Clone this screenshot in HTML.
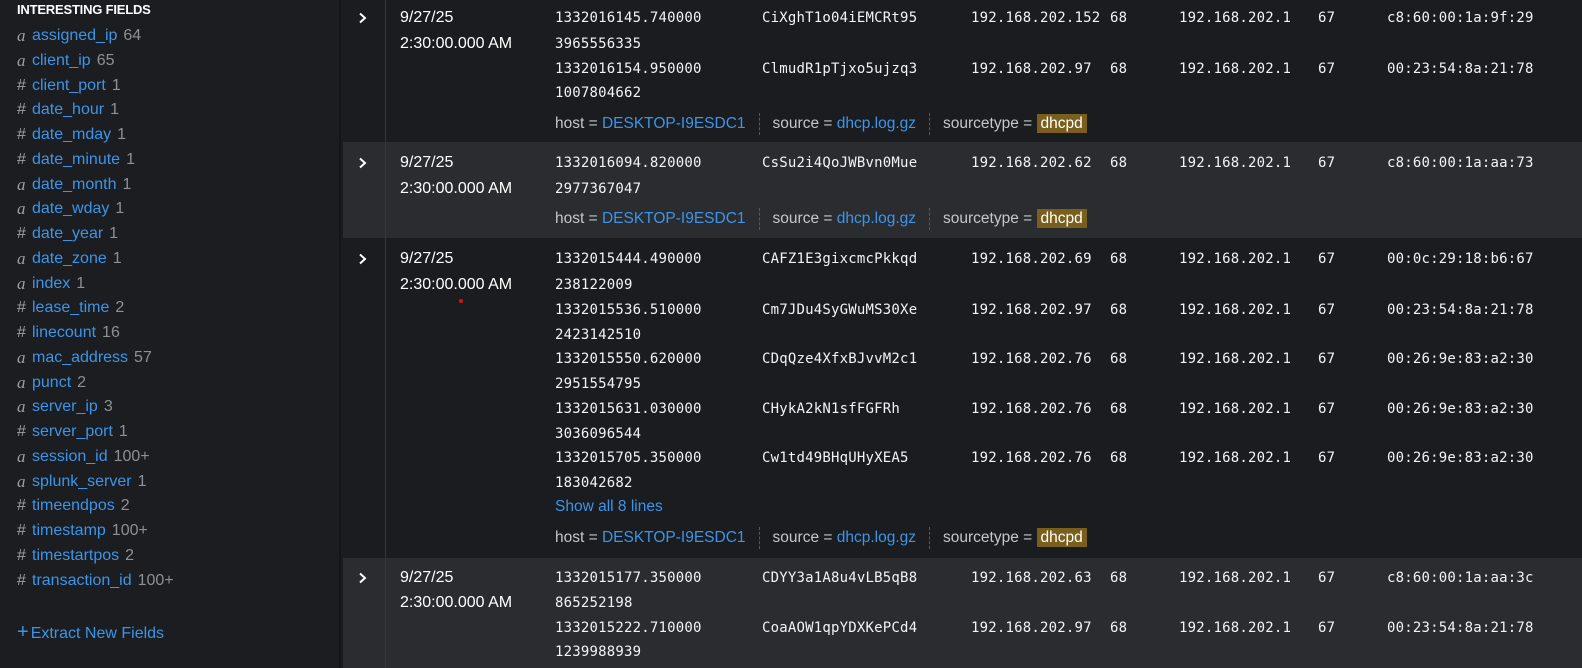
<!DOCTYPE html>
<html><head><meta charset="utf-8"><style>
*{margin:0;padding:0;box-sizing:border-box}
body{width:1582px;height:668px;overflow:hidden;background:#1a1c20;position:relative;font-family:"Liberation Sans",sans-serif;color:#e6e8ea}
#side{position:absolute;left:0;top:0;width:341px;height:668px;background:#1b1d21;border-right:2px solid #131518}
#side .h{position:absolute;left:17px;top:2px;font-size:13px;font-weight:bold;color:#fff;letter-spacing:-0.2px}
#side .f{position:absolute;left:17px;font-size:16px;color:#3c95e8;white-space:nowrap;line-height:20px;height:20px}
#side .f i{display:inline-block;width:15px;color:#9aa0a6;font-family:"Liberation Serif",serif;font-size:17px;line-height:20px;vertical-align:top}
#side .f b{display:inline-block;width:15px;color:#9aa0a6;font-weight:normal;line-height:20px;vertical-align:top}
#side .f s{color:#8c9196;text-decoration:none;margin-left:6px}
.row{position:absolute;left:343px;width:1239px}
.vl{position:absolute;left:385px;top:0;width:1px;height:668px;background:#33373c}
.chev{position:absolute;left:357px;width:12px;height:12px}
.t{position:absolute;left:400px;font-size:16px;color:#fff;line-height:20px;white-space:nowrap}
.m{position:absolute;font-family:"DejaVu Sans Mono",monospace;font-size:14px;letter-spacing:0.2px;color:#f2f3f4;line-height:18px;white-space:nowrap}
.meta{position:absolute;left:555px;font-size:15.5px;color:#c3c7cb;line-height:22px;white-space:nowrap}
.meta a{color:#3c95e8;text-decoration:none}
.meta .sep{display:inline-block;width:0;height:22px;border-left:1px dashed #555a60;vertical-align:middle;margin:0 13px 0 13px}
.meta .hl{background:#7a5f1c;color:#fff;padding:1px 4px}
.show{position:absolute;left:555px;font-size:15.5px;color:#3c95e8;line-height:20px}
</style></head><body>
<div id="side">
<div class="h">INTERESTING FIELDS</div>
<div class="f" style="top:26px"><i>a</i>assigned_ip<s>64</s></div>
<div class="f" style="top:51px"><i>a</i>client_ip<s>65</s></div>
<div class="f" style="top:76px"><b>#</b>client_port<s>1</s></div>
<div class="f" style="top:100px"><b>#</b>date_hour<s>1</s></div>
<div class="f" style="top:125px"><b>#</b>date_mday<s>1</s></div>
<div class="f" style="top:150px"><b>#</b>date_minute<s>1</s></div>
<div class="f" style="top:175px"><i>a</i>date_month<s>1</s></div>
<div class="f" style="top:199px"><i>a</i>date_wday<s>1</s></div>
<div class="f" style="top:224px"><b>#</b>date_year<s>1</s></div>
<div class="f" style="top:249px"><i>a</i>date_zone<s>1</s></div>
<div class="f" style="top:274px"><i>a</i>index<s>1</s></div>
<div class="f" style="top:298px"><b>#</b>lease_time<s>2</s></div>
<div class="f" style="top:323px"><b>#</b>linecount<s>16</s></div>
<div class="f" style="top:348px"><i>a</i>mac_address<s>57</s></div>
<div class="f" style="top:373px"><i>a</i>punct<s>2</s></div>
<div class="f" style="top:397px"><i>a</i>server_ip<s>3</s></div>
<div class="f" style="top:422px"><b>#</b>server_port<s>1</s></div>
<div class="f" style="top:447px"><i>a</i>session_id<s>100+</s></div>
<div class="f" style="top:472px"><i>a</i>splunk_server<s>1</s></div>
<div class="f" style="top:496px"><b>#</b>timeendpos<s>2</s></div>
<div class="f" style="top:521px"><b>#</b>timestamp<s>100+</s></div>
<div class="f" style="top:546px"><b>#</b>timestartpos<s>2</s></div>
<div class="f" style="top:571px"><b>#</b>transaction_id<s>100+</s></div>
<div class="f" style="top:622px;font-size:16px"><span style="font-size:20px;margin-right:2px">+</span>Extract New Fields</div>
</div>

<div class="row" style="top:0;height:142px;background:#1a1c20"></div>
<div class="row" style="top:142px;height:96px;background:#2a2c30"></div>
<div class="row" style="top:238px;height:320px;background:#1a1c20"></div>
<div class="row" style="top:558px;height:110px;background:#2a2c30"></div>
<div class="vl"></div>

<svg class="chev" style="top:12px" viewBox="0 0 12 12"><path d="M3 1.5L8 6L3 10.5" stroke="#fff" stroke-width="2" fill="none"/></svg>
<svg class="chev" style="top:157px" viewBox="0 0 12 12"><path d="M3 1.5L8 6L3 10.5" stroke="#fff" stroke-width="2" fill="none"/></svg>
<svg class="chev" style="top:253px" viewBox="0 0 12 12"><path d="M3 1.5L8 6L3 10.5" stroke="#fff" stroke-width="2" fill="none"/></svg>
<svg class="chev" style="top:572px" viewBox="0 0 12 12"><path d="M3 1.5L8 6L3 10.5" stroke="#fff" stroke-width="2" fill="none"/></svg>

<div class="t" style="top:8px">9/27/25</div><div class="t" style="top:34px">2:30:00.000 AM</div>
<div class="t" style="top:153px">9/27/25</div><div class="t" style="top:179px">2:30:00.000 AM</div>
<div class="t" style="top:249px">9/27/25</div><div class="t" style="top:275px">2:30:00.000 AM</div>
<div class="t" style="top:568px">9/27/25</div><div class="t" style="top:593px">2:30:00.000 AM</div>
<div style="position:absolute;left:459px;top:299px;width:4px;height:4px;border-radius:2px;background:#e01010"></div>

<!-- row1 -->
<div class="m" style="left:555px;top:9px">1332016145.740000</div><div class="m" style="left:762px;top:9px">CiXghT1o04iEMCRt95</div><div class="m" style="left:971px;top:9px">192.168.202.152</div><div class="m" style="left:1110px;top:9px">68</div><div class="m" style="left:1179px;top:9px">192.168.202.1</div><div class="m" style="left:1318px;top:9px">67</div><div class="m" style="left:1387px;top:9px">c8:60:00:1a:9f:29</div>
<div class="m" style="left:555px;top:35px">3965556335</div>
<div class="m" style="left:555px;top:60px">1332016154.950000</div><div class="m" style="left:762px;top:60px">ClmudR1pTjxo5ujzq3</div><div class="m" style="left:971px;top:60px">192.168.202.97</div><div class="m" style="left:1110px;top:60px">68</div><div class="m" style="left:1179px;top:60px">192.168.202.1</div><div class="m" style="left:1318px;top:60px">67</div><div class="m" style="left:1387px;top:60px">00:23:54:8a:21:78</div>
<div class="m" style="left:555px;top:84px">1007804662</div>
<div class="meta" style="top:113px">host = <a>DESKTOP-I9ESDC1</a><span class="sep"></span>source = <a>dhcp.log.gz</a><span class="sep"></span>sourcetype = <span class="hl">dhcpd</span></div>

<!-- row2 -->
<div class="m" style="left:555px;top:154px">1332016094.820000</div><div class="m" style="left:762px;top:154px">CsSu2i4QoJWBvn0Mue</div><div class="m" style="left:971px;top:154px">192.168.202.62</div><div class="m" style="left:1110px;top:154px">68</div><div class="m" style="left:1179px;top:154px">192.168.202.1</div><div class="m" style="left:1318px;top:154px">67</div><div class="m" style="left:1387px;top:154px">c8:60:00:1a:aa:73</div>
<div class="m" style="left:555px;top:180px">2977367047</div>
<div class="meta" style="top:208px">host = <a>DESKTOP-I9ESDC1</a><span class="sep"></span>source = <a>dhcp.log.gz</a><span class="sep"></span>sourcetype = <span class="hl">dhcpd</span></div>

<!-- row3 -->
<div class="m" style="left:555px;top:250px">1332015444.490000</div><div class="m" style="left:762px;top:250px">CAFZ1E3gixcmcPkkqd</div><div class="m" style="left:971px;top:250px">192.168.202.69</div><div class="m" style="left:1110px;top:250px">68</div><div class="m" style="left:1179px;top:250px">192.168.202.1</div><div class="m" style="left:1318px;top:250px">67</div><div class="m" style="left:1387px;top:250px">00:0c:29:18:b6:67</div>
<div class="m" style="left:555px;top:276px">238122009</div>
<div class="m" style="left:555px;top:301px">1332015536.510000</div><div class="m" style="left:762px;top:301px">Cm7JDu4SyGWuMS30Xe</div><div class="m" style="left:971px;top:301px">192.168.202.97</div><div class="m" style="left:1110px;top:301px">68</div><div class="m" style="left:1179px;top:301px">192.168.202.1</div><div class="m" style="left:1318px;top:301px">67</div><div class="m" style="left:1387px;top:301px">00:23:54:8a:21:78</div>
<div class="m" style="left:555px;top:326px">2423142510</div>
<div class="m" style="left:555px;top:350px">1332015550.620000</div><div class="m" style="left:762px;top:350px">CDqQze4XfxBJvvM2c1</div><div class="m" style="left:971px;top:350px">192.168.202.76</div><div class="m" style="left:1110px;top:350px">68</div><div class="m" style="left:1179px;top:350px">192.168.202.1</div><div class="m" style="left:1318px;top:350px">67</div><div class="m" style="left:1387px;top:350px">00:26:9e:83:a2:30</div>
<div class="m" style="left:555px;top:375px">2951554795</div>
<div class="m" style="left:555px;top:400px">1332015631.030000</div><div class="m" style="left:762px;top:400px">CHykA2kN1sfFGFRh</div><div class="m" style="left:971px;top:400px">192.168.202.76</div><div class="m" style="left:1110px;top:400px">68</div><div class="m" style="left:1179px;top:400px">192.168.202.1</div><div class="m" style="left:1318px;top:400px">67</div><div class="m" style="left:1387px;top:400px">00:26:9e:83:a2:30</div>
<div class="m" style="left:555px;top:425px">3036096544</div>
<div class="m" style="left:555px;top:449px">1332015705.350000</div><div class="m" style="left:762px;top:449px">Cw1td49BHqUHyXEA5</div><div class="m" style="left:971px;top:449px">192.168.202.76</div><div class="m" style="left:1110px;top:449px">68</div><div class="m" style="left:1179px;top:449px">192.168.202.1</div><div class="m" style="left:1318px;top:449px">67</div><div class="m" style="left:1387px;top:449px">00:26:9e:83:a2:30</div>
<div class="m" style="left:555px;top:474px">183042682</div>
<div class="show" style="top:497px">Show all 8 lines</div>
<div class="meta" style="top:527px">host = <a>DESKTOP-I9ESDC1</a><span class="sep"></span>source = <a>dhcp.log.gz</a><span class="sep"></span>sourcetype = <span class="hl">dhcpd</span></div>

<!-- row4 -->
<div class="m" style="left:555px;top:569px">1332015177.350000</div><div class="m" style="left:762px;top:569px">CDYY3a1A8u4vLB5qB8</div><div class="m" style="left:971px;top:569px">192.168.202.63</div><div class="m" style="left:1110px;top:569px">68</div><div class="m" style="left:1179px;top:569px">192.168.202.1</div><div class="m" style="left:1318px;top:569px">67</div><div class="m" style="left:1387px;top:569px">c8:60:00:1a:aa:3c</div>
<div class="m" style="left:555px;top:594px">865252198</div>
<div class="m" style="left:555px;top:619px">1332015222.710000</div><div class="m" style="left:762px;top:619px">CoaAOW1qpYDXKePCd4</div><div class="m" style="left:971px;top:619px">192.168.202.97</div><div class="m" style="left:1110px;top:619px">68</div><div class="m" style="left:1179px;top:619px">192.168.202.1</div><div class="m" style="left:1318px;top:619px">67</div><div class="m" style="left:1387px;top:619px">00:23:54:8a:21:78</div>
<div class="m" style="left:555px;top:643px">1239988939</div>
</body></html>
